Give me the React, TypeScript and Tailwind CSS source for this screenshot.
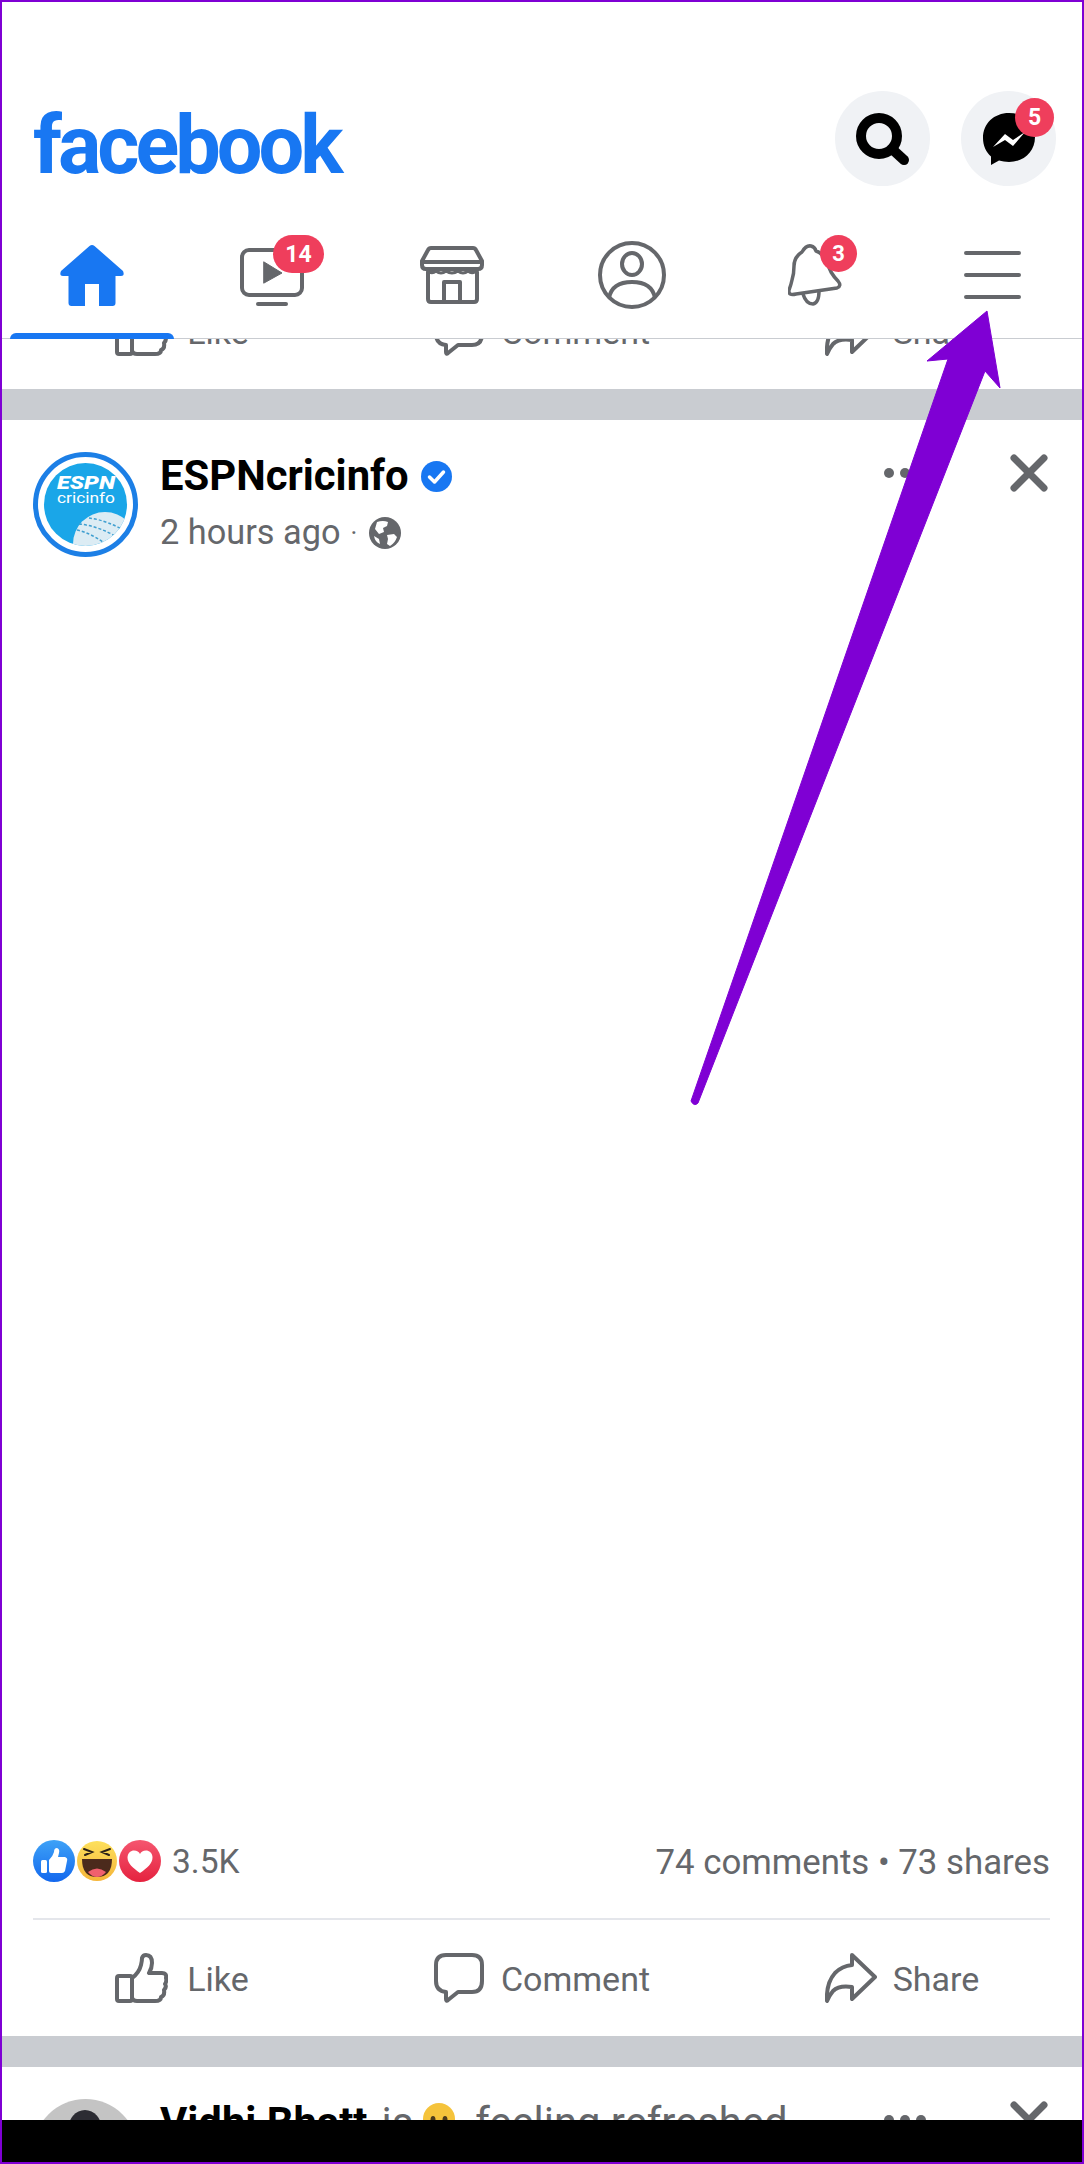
const GRAY = "#65676b";

function HomeIcon() {
  return (
    <svg width="64" height="61" viewBox="0 0 64 61" fill="#1877f2">
      <path d="M29.5 1L1 26Q-1 31 3 31H8.5V58Q8.5 61 11.5 61H25V39H39V61H52.5Q55.5 61 55.5 58V31H61Q65 31 63 26L34.5 1Q32 -1 29.5 1Z" />
    </svg>
  );
}

function VideoIcon() {
  return (
    <svg width="64" height="58" viewBox="0 0 64 58" fill="none" stroke={GRAY} strokeWidth="4" strokeLinecap="round" className="mt-[4px]">
      <rect x="2" y="2" width="60" height="45" rx="7" />
      <path d="M18 56H46" />
      <path d="M24 14L42 25L24 35Z" fill={GRAY} strokeWidth="1" strokeLinejoin="round" />
    </svg>
  );
}

function StoreIcon() {
  return (
    <svg width="64" height="58" viewBox="0 0 64 58" fill="none" stroke={GRAY} strokeWidth="4" strokeLinejoin="round" strokeLinecap="round">
      <path d="M11 2H53Q55 2 56 4L62 15V19Q62 23 58 23H6Q2 23 2 19V15L8 4Q9 2 11 2Z" />
      <path d="M2 16H62" />
      <path d="M6 23Q11 29 16 25Q21 29 26 25Q32 29 38 25Q43 29 48 25Q53 29 58 23" strokeWidth="3" />
      <path d="M8 26V53Q8 56 11 56H54Q57 56 57 53V26" />
      <path d="M24 56V36H40V56" />
    </svg>
  );
}

function ProfileIcon() {
  return (
    <svg width="68" height="68" viewBox="0 0 68 68" fill="none" stroke={GRAY} strokeWidth="4">
      <circle cx="34" cy="34" r="32" />
      <ellipse cx="34" cy="23" rx="10" ry="11" />
      <path d="M11 57Q14 41 34 41Q54 41 57 57" />
    </svg>
  );
}

function BellIcon() {
  return (
    <svg width="54" height="62" viewBox="0 0 54 62" fill="none" stroke={GRAY} strokeWidth="3.5" strokeLinejoin="round" className="ml-[6px]">
      <path d="M14 8Q18 1 23 2Q27 3 28 7Q34 9 38 16Q41 24 43 28Q46 33 50 37Q54 42 49 44L8 50Q0 52 1 46Q3 41 4 36Q6 30 6 22Q6 13 14 8Z" />
      <path d="M15 50Q18 60 25 60Q31 59 31 47" />
    </svg>
  );
}

function MenuIcon() {
  return (
    <svg width="57" height="48" viewBox="0 0 57 48" stroke={GRAY} strokeWidth="4" strokeLinecap="round">
      <path d="M2 2H55M2 24H55M2 46H55" />
    </svg>
  );
}

function SearchIcon() {
  return (
    <svg width="53" height="53" viewBox="0 0 53 53" fill="none" stroke="#000" strokeLinecap="round">
      <circle cx="23" cy="24" r="18" strokeWidth="10" />
      <path d="M36 37L48 48" strokeWidth="10" />
    </svg>
  );
}

function MessengerIcon() {
  return (
    <svg width="52" height="52" viewBox="0 0 52 52">
      <path d="M26 0C11 0 0 10.6 0 25c0 7.5 3 14 8 18.5V52l8-4.4c3 .8 6.5 1.4 10 1.4 15 0 26-10.6 26-25S41 0 26 0z" fill="#000" />
      <path d="M10 34L22 21L30 27L42 19L30 33L22 27Z" fill="#fff" />
    </svg>
  );
}

function LikeIcon() {
  return (
    <svg width="53" height="50" viewBox="0 0 53 50" fill="none" stroke={GRAY} strokeWidth="4" strokeLinejoin="round">
      <rect x="2" y="23" width="15" height="25" rx="2" />
      <path d="M17 25Q24 20 26 12Q27 8 27 5Q28 2 31 2Q37 2 37 10Q37 15 34 20H47Q52 20 51 25Q52 28 50 31Q52 34 49 37Q50 43 46 44Q46 48 40 48H22Q18 48 17 45" />
    </svg>
  );
}

function CommentIcon() {
  return (
    <svg width="50" height="50" viewBox="0 0 50 50" fill="none" stroke={GRAY} strokeWidth="4" strokeLinejoin="round">
      <path d="M12 2H38Q48 2 48 12V28Q48 39 38 39H24L14 47Q12 49 12 46V39Q2 38 2 28V12Q2 2 12 2Z" />
    </svg>
  );
}

function ShareIcon() {
  return (
    <svg width="52" height="50" viewBox="0 0 52 50" fill="none" stroke={GRAY} strokeWidth="4" strokeLinejoin="round">
      <path d="M27 2L50 24L27 46V34Q14 32 8 38Q4 43 2 48Q1 30 10 20Q17 13 27 12Z" />
    </svg>
  );
}

function CloseIcon() {
  return (
    <svg width="38" height="38" viewBox="0 0 38 38" stroke={GRAY} strokeWidth="7" strokeLinecap="round">
      <path d="M4 4L34 34M34 4L4 34" />
    </svg>
  );
}

function VerifiedIcon() {
  return (
    <svg width="31" height="31" viewBox="0 0 31 31">
      <circle cx="15.5" cy="15.5" r="15.5" fill="#1877f2" />
      <path d="M8.5 16L13.5 21L22.5 11" fill="none" stroke="#fff" strokeWidth="3.5" strokeLinecap="round" strokeLinejoin="round" />
    </svg>
  );
}

function GlobeIcon() {
  return (
    <svg width="32" height="32" viewBox="0 0 32 32">
      <circle cx="16" cy="16" r="16" fill={GRAY} />
      <path d="M8 5Q14 3 19 5L18 9L14 11L15 15L10 17L6 12Z" fill="#fff" />
      <path d="M18 18L25 17L28 20Q26 26 21 29L18 27L19 22Z" fill="#fff" />
      <path d="M5 19L10 22L11 27Q6 25 5 19Z" fill="#fff" />
    </svg>
  );
}

function EspnAvatar() {
  return (
    <svg width="105" height="105" viewBox="0 0 105 105" className="shrink-0">
      <defs>
        <clipPath id="espnClip">
          <circle cx="52.5" cy="52.5" r="41.5" />
        </clipPath>
      </defs>
      <circle cx="52.5" cy="52.5" r="50" fill="#fff" stroke="#1c7fe6" strokeWidth="5" />
      <circle cx="52.5" cy="52.5" r="41.5" fill="#1aa6e8" />
      <g clipPath="url(#espnClip)">
        <circle cx="72" cy="92" r="32" fill="#dcecf4" />
        <path d="M44 78Q62 82 80 98M46 72Q68 74 92 90M56 66Q74 68 98 82" fill="none" stroke="#3f9fd0" strokeWidth="1.5" strokeDasharray="3 2" />
      </g>
      <text x="53" y="37" textAnchor="middle" fill="#fff" fontSize="19" fontWeight="900" fontStyle="italic" textLength="58" lengthAdjust="spacingAndGlyphs">ESPN</text>
      <text x="53" y="51" textAnchor="middle" fill="#fff" fontSize="15" textLength="58" lengthAdjust="spacingAndGlyphs">cricinfo</text>
    </svg>
  );
}

function VidhiAvatar() {
  return (
    <svg width="105" height="105" viewBox="0 0 105 105" className="shrink-0">
      <circle cx="52.5" cy="52.5" r="52.5" fill="#c4c4c4" />
      <ellipse cx="52" cy="31" rx="17" ry="20" fill="#2c2c33" />
    </svg>
  );
}

function LikeReaction() {
  return (
    <svg width="42" height="42" viewBox="0 0 42 42">
      <defs>
        <linearGradient id="likeGrad" x1="0" y1="0" x2="0" y2="1">
          <stop offset="0" stopColor="#3ea2f7" />
          <stop offset="1" stopColor="#1368ee" />
        </linearGradient>
      </defs>
      <circle cx="21" cy="21" r="21" fill="url(#likeGrad)" />
      <rect x="8" y="20" width="6" height="13" rx="1.5" fill="#fff" />
      <path d="M16 20Q20 16 21 12Q21 8 24 8Q27 9 26 13L25 17H32Q35 18 34 21L32 31Q31 33 29 33H18Q16 33 16 31Z" fill="#fff" />
    </svg>
  );
}

function HahaReaction() {
  return (
    <svg width="42" height="42" viewBox="0 0 42 42">
      <defs>
        <linearGradient id="hahaGrad" x1="0" y1="0" x2="0" y2="1">
          <stop offset="0" stopColor="#fde05c" />
          <stop offset="1" stopColor="#f5b53a" />
        </linearGradient>
      </defs>
      <circle cx="21" cy="21" r="20" fill="url(#hahaGrad)" />
      <path d="M8 9L16 12L9 15M34 9L26 12L33 15" fill="none" stroke="#2c2118" strokeWidth="2" strokeLinecap="round" />
      <path d="M6 19H36Q36 37 21 37Q6 37 6 19Z" fill="#4b2a1c" />
      <path d="M12 32Q21 25 30 32Q26 37 21 37Q16 37 12 32Z" fill="#f0606e" />
    </svg>
  );
}

function LoveReaction() {
  return (
    <svg width="42" height="42" viewBox="0 0 42 42">
      <defs>
        <linearGradient id="loveGrad" x1="0" y1="0" x2="0" y2="1">
          <stop offset="0" stopColor="#f5566f" />
          <stop offset="1" stopColor="#e5223f" />
        </linearGradient>
      </defs>
      <circle cx="21" cy="21" r="21" fill="url(#loveGrad)" />
      <path d="M21 33C14 28 8.5 23.500 8.500 17.500C8.500 13 12 10.500 15 10.500C18 10.500 20 12 21 14C22 12 24 10.500 27 10.500C30 10.500 33.500 13 33.500 17.500C33.500 23.500 28 28 21 33Z" fill="#fff" />
    </svg>
  );
}

function SmileEmoji() {
  return (
    <svg width="32" height="32" viewBox="0 0 32 32" className="shrink-0 self-start">
      <circle cx="16" cy="16" r="16" fill="#f5c33b" />
      <ellipse cx="10" cy="17" rx="2.500" ry="4" fill="#4b3a1c" />
      <ellipse cx="22" cy="17" rx="2.500" ry="4" fill="#4b3a1c" />
    </svg>
  );
}

function Badge({ text, className }: { text: string; className: string }) {
  return (
    <span className={`absolute flex items-center justify-center rounded-full bg-[#ef3e5c] text-white font-bold leading-none ${className}`}>
      {text}
    </span>
  );
}

function Tab({ children, active }: { children: React.ReactNode; active?: boolean }) {
  return (
    <div className="relative flex items-center justify-center">
      {children}
      {active && <div className="absolute bottom-[-1px] left-[8px] right-[8px] h-[6px] rounded-t-[6px] bg-[#1877f2]" />}
    </div>
  );
}

function ActionRow() {
  return (
    <div className="grid grid-cols-3 h-[116px] shrink-0 text-[34px] text-[#65676b]">
      <div className="flex items-center justify-center gap-[19px]">
        <LikeIcon />
        <span className="pt-[2px]">Like</span>
      </div>
      <div className="flex items-center justify-center gap-[17px]">
        <CommentIcon />
        <span className="pt-[2px]">Comment</span>
      </div>
      <div className="flex items-center justify-center gap-[16px]">
        <ShareIcon />
        <span className="pt-[2px]">Share</span>
      </div>
    </div>
  );
}

function PostHeader({ avatar, children }: { avatar: React.ReactNode; children: React.ReactNode }) {
  return (
    <div className="flex pl-[31px] pr-[34px] pt-[32px] shrink-0">
      {avatar}
      <div className="ml-[22px] flex flex-col">{children}</div>
      <div className="ml-auto mt-[2px] flex items-center h-[38px] gap-[84px]">
        <div className="flex gap-[6px]">
          <span className="w-[10px] h-[10px] rounded-full bg-[#65676b]" />
          <span className="w-[10px] h-[10px] rounded-full bg-[#65676b]" />
          <span className="w-[10px] h-[10px] rounded-full bg-[#65676b]" />
        </div>
        <CloseIcon />
      </div>
    </div>
  );
}

export default function App() {
  return (
    <div className="relative w-[1084px] h-[2164px] box-border border-2 border-[#7f00d4] bg-white overflow-hidden flex flex-col [font-family:Roboto,sans-serif]">
      {/* top bar */}
      <div className="shrink-0 border-b border-[#c9ccd1] relative z-10 bg-white">
        <div className="flex items-center justify-between h-[184px] pt-[89px] pl-[31px] pr-[26px]">
          <span className="self-end text-[81px] leading-[81px] font-bold tracking-[-4px] text-[#1877f2]">facebook</span>
          <div className="flex gap-[31px]">
            <div className="w-[95px] h-[95px] rounded-full bg-[#f0f2f5] flex items-center justify-center">
              <SearchIcon />
            </div>
            <div className="relative w-[95px] h-[95px] rounded-full bg-[#f0f2f5] flex items-center justify-center">
              <MessengerIcon />
              <Badge text="5" className="left-[54px] top-[7px] w-[39px] h-[39px] text-[23px]" />
            </div>
          </div>
        </div>
        <div className="grid grid-cols-6 h-[126px] mt-[26px]">
          <Tab active>
            <HomeIcon />
          </Tab>
          <Tab>
            <VideoIcon />
            <Badge text="14" className="left-[91px] top-[23px] w-[51px] h-[38px] text-[23px]" />
          </Tab>
          <Tab>
            <StoreIcon />
          </Tab>
          <Tab>
            <ProfileIcon />
          </Tab>
          <Tab>
            <BellIcon />
            <Badge text="3" className="left-[98px] top-[23px] w-[37px] h-[37px] text-[22px]" />
          </Tab>
          <Tab>
            <MenuIcon />
          </Tab>
        </div>
      </div>

      {/* previous post, scrolled under the bar */}
      <div className="h-[50px] shrink-0 overflow-hidden flex flex-col justify-end">
        <ActionRow />
      </div>
      <div className="h-[31px] shrink-0 bg-[#c9ccd1]" />

      {/* post */}
      <div className="flex-1 min-h-0 flex flex-col">
        <PostHeader avatar={<EspnAvatar />}>
          <div className="mt-[4px] flex items-center gap-[12px] h-[40px]">
            <span className="text-[41.800px] leading-[40px] font-bold text-black">ESPNcricinfo</span>
            <VerifiedIcon />
          </div>
          <div className="mt-[17px] flex items-center h-[40px] text-[34.300px] text-[#65676b]">
            <span>2 hours ago</span>
            <span className="ml-[10px] text-[26px]">·</span>
            <span className="ml-[12px]">
              <GlobeIcon />
            </span>
          </div>
        </PostHeader>
        <div className="flex-1 min-h-0" />
        <div className="h-[114px] shrink-0 flex items-center justify-between pl-[31px] pr-[32px] text-[33.500px] text-[#65676b]">
          <div className="flex items-center">
            <div className="flex gap-[1px]">
              <LikeReaction />
              <HahaReaction />
              <LoveReaction />
            </div>
            <span className="ml-[11px] pt-[2px]">3.5K</span>
          </div>
          <span className="text-[34.800px] pt-[2px]">74 comments • 73 shares</span>
        </div>
        <div className="h-[2px] shrink-0 ml-[31px] mr-[32px] bg-[#e4e6eb]" />
        <ActionRow />
      </div>
      <div className="h-[31px] shrink-0 bg-[#c9ccd1]" />

      {/* next post, cut off by the black bar */}
      <div className="h-[53px] shrink-0 overflow-hidden">
        <PostHeader avatar={<VidhiAvatar />}>
          <div className="mt-[4px] flex items-center h-[40px] whitespace-nowrap text-[41.800px] leading-[40px] text-[#65676b]">
            <span className="font-bold text-black">Vidhi Bhatt</span>
            <span className="ml-[14px]">is</span>
            <span className="ml-[10px] flex self-start">
              <SmileEmoji />
            </span>
            <span className="ml-[20px]">feeling refreshed</span>
          </div>
        </PostHeader>
      </div>
      <div className="h-[42px] shrink-0 bg-black" />

      {/* annotation arrow drawn over the screenshot */}
      <svg width="1084" height="2164" viewBox="0 0 1084 2164" className="absolute -left-[2px] -top-[2px] z-20 pointer-events-none">
        <path
          d="M987 311L1000 388L985 371L698 1103Q694 1107 691 1101L948 359L927 361Z"
          fill="#7f00d4"
          stroke="#7f00d4"
          strokeWidth="1"
          strokeLinejoin="round"
        />
      </svg>
    </div>
  );
}
